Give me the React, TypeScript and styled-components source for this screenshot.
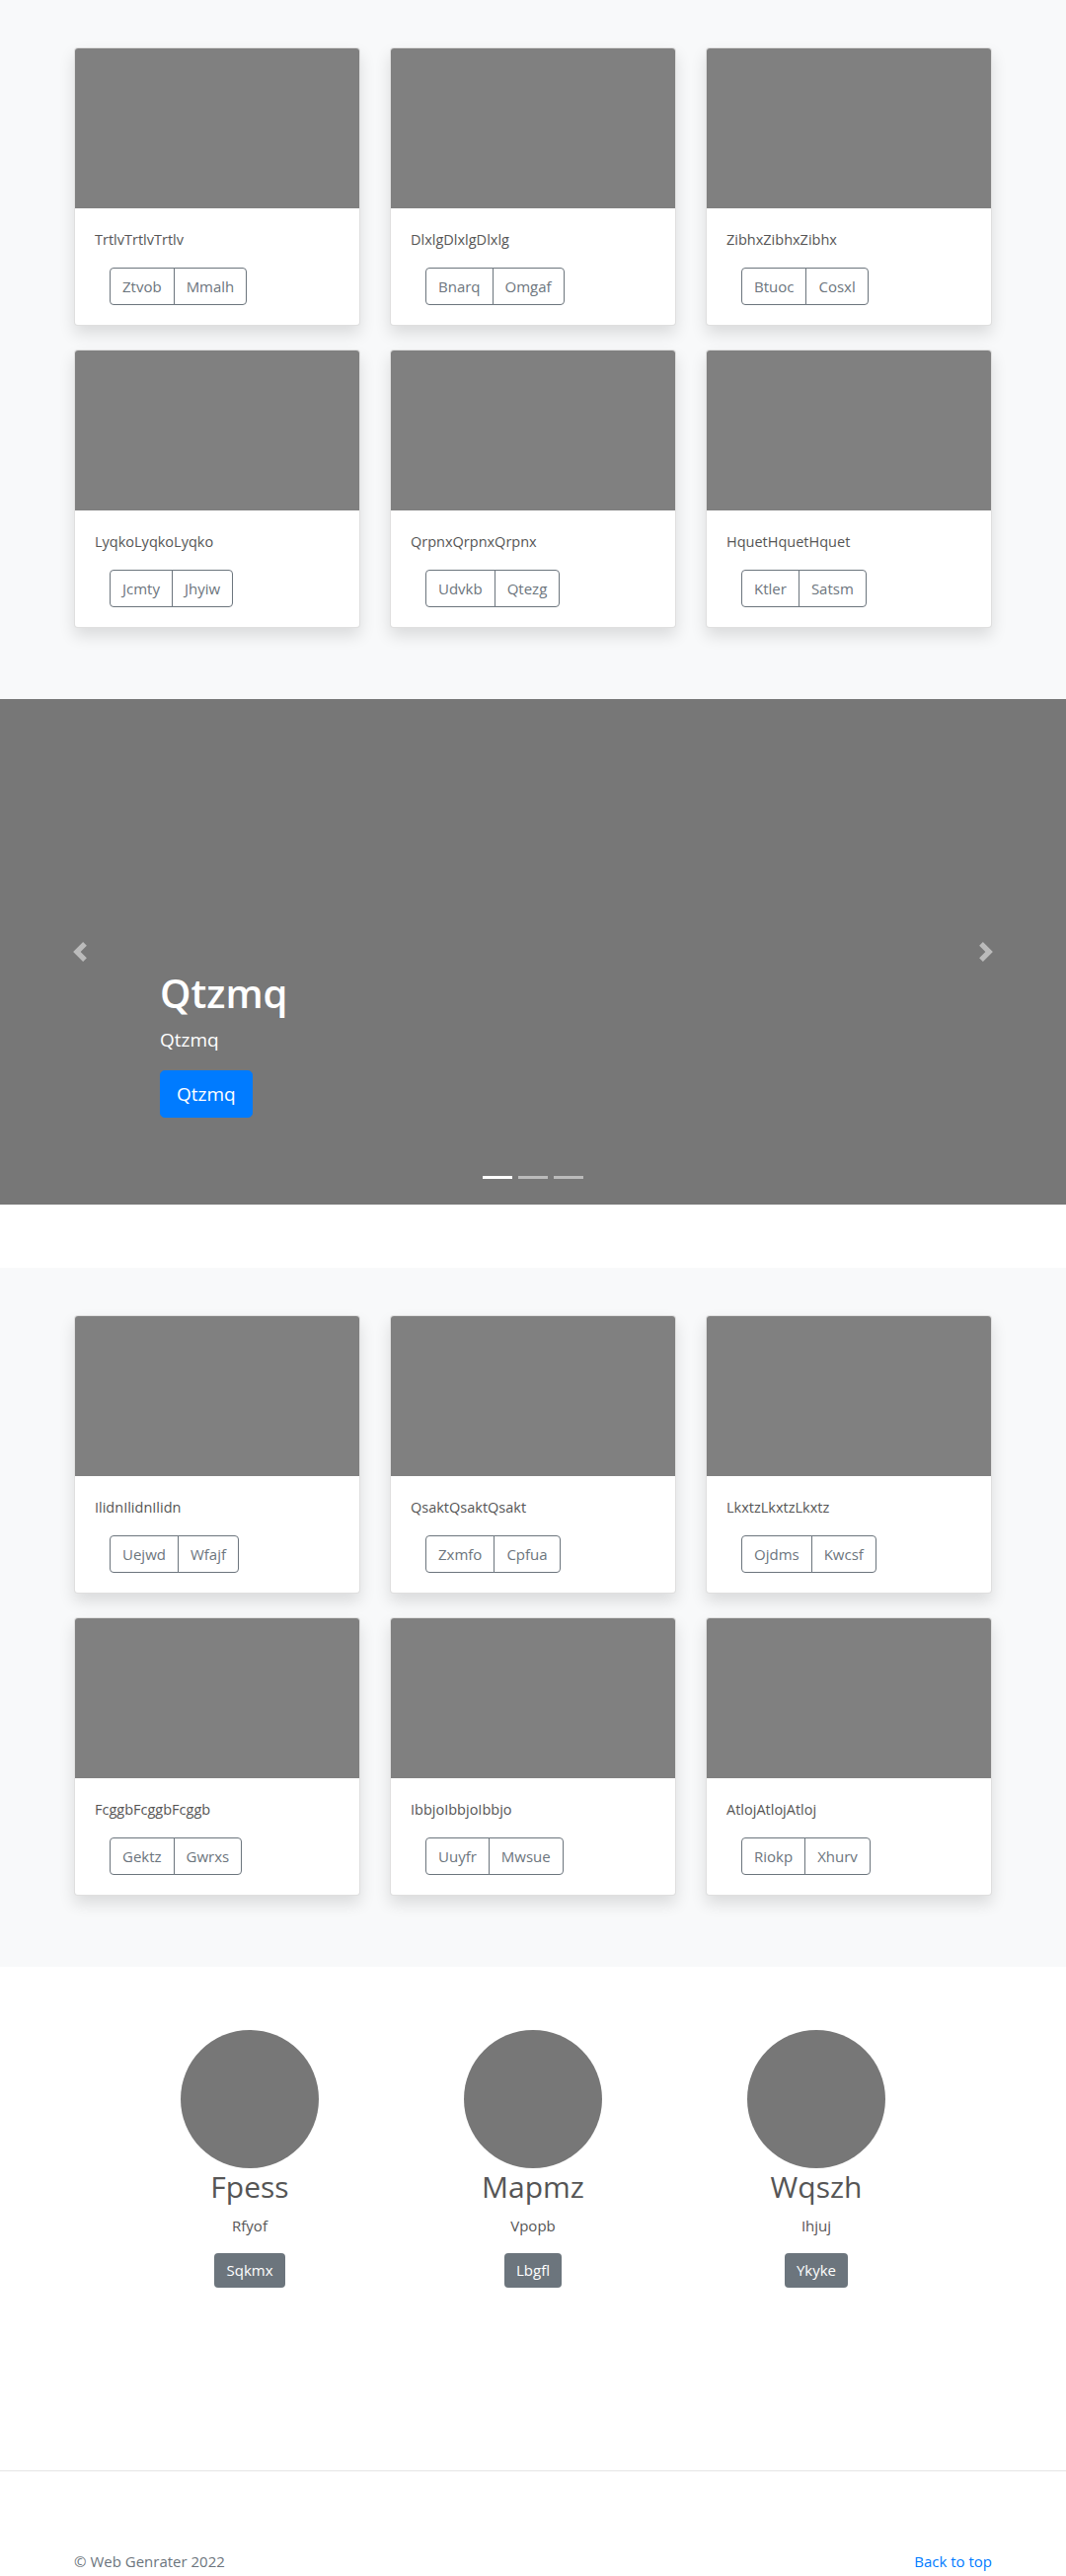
import React from "react";
import styled, { createGlobalStyle } from "styled-components";

const GlobalStyle = createGlobalStyle`
  * { box-sizing: border-box; }
  html, body { margin: 0; padding: 0; }
  body {
    font-family: "Open Sans", "Noto Sans", "Liberation Sans", sans-serif;
    font-size: 16px;
    line-height: 1.5;
    color: #212529;
    background: #fff;
  }
`;

const Album = styled.section`
  background: #f8f9fa;
  padding: 48px 0 48px;
`;

const Container = styled.div`
  width: 960px;
  margin: 0 auto;
  padding: 0 15px;
`;

const CardGrid = styled.div`
  display: grid;
  grid-template-columns: repeat(3, 290px);
  column-gap: 30px;
`;

const Card = styled.div`
  background: #fff;
  border: 1px solid rgba(0, 0, 0, 0.125);
  border-radius: 4px;
  box-shadow: 0 0.5rem 1rem rgba(0, 0, 0, 0.12);
  margin-bottom: 24px;
  overflow: hidden;
  display: flex;
  flex-direction: column;
`;

const CardImage = styled.div`
  height: 162px;
  background: #808080;
`;

const CardBody = styled.div`
  padding: 20px;
`;

const CardText = styled.p`
  margin: 0 0 16px;
  font-size: 14.5px;
  line-height: 24px;
  color: #555;
`;

const BtnGroup = styled.div`
  display: inline-flex;
  margin-left: 15px;
`;

const OutlineBtn = styled.button<{ $pos: "first" | "last" }>`
  font-family: inherit;
  font-size: 15px;
  line-height: 24px;
  padding: 6px 12px;
  color: #6c757d;
  background: transparent;
  border: 1px solid #6c757d;
  border-radius: ${(p) => (p.$pos === "first" ? "4px 0 0 4px" : "0 4px 4px 0")};
  margin-left: ${(p) => (p.$pos === "first" ? "0" : "-1px")};
  cursor: pointer;
`;

const Carousel = styled.div`
  position: relative;
  height: 512px;
  background: #777;
  margin-bottom: 64px;
`;

const Control = styled.div<{ $side: "left" | "right" }>`
  position: absolute;
  top: 0;
  bottom: 0;
  ${(p) => p.$side}: 0;
  width: 15%;
  display: flex;
  align-items: center;
  justify-content: center;
  opacity: 0.5;
`;

const Caption = styled.div`
  position: absolute;
  left: 15%;
  right: 15%;
  bottom: 52px;
  padding: 20px 0;
  color: #fff;
  text-align: left;
`;

const CaptionTitle = styled.h1`
  margin: 0 0 8px;
  font-size: 40px;
  font-weight: 600;
  line-height: 1.2;
`;

const Lead = styled.p`
  margin: 0 0 16px;
  font-size: 19px;
  line-height: 30px;
`;

const BtnRow = styled.p`
  margin: 0 0 16px;
  line-height: 0;
`;

const PrimaryBtnLg = styled.a`
  display: inline-block;
  background: #007bff;
  color: #fff;
  font-size: 19px;
  line-height: 30px;
  padding: 8px 16px;
  border: 1px solid #007bff;
  border-radius: 4.8px;
  text-decoration: none;
`;

const Indicators = styled.ol`
  position: absolute;
  left: 0;
  right: 0;
  bottom: 0;
  margin: 0 0 16px;
  padding: 0;
  list-style: none;
  display: flex;
  justify-content: center;
`;

const Indicator = styled.li<{ $active?: boolean }>`
  width: 30px;
  height: 3px;
  margin: 10px 3px;
  background: ${(p) => (p.$active ? "#fff" : "rgba(255,255,255,0.5)")};
`;

const Marketing = styled.section`
  padding: 64px 0 0;
`;

const MarketingGrid = styled.div`
  width: 861px;
  margin: 0 auto;
  display: grid;
  grid-template-columns: repeat(3, 1fr);
`;

const Person = styled.div`
  display: flex;
  flex-direction: column;
  align-items: center;
  text-align: center;
  margin-bottom: 24px;
`;

const Avatar = styled.div`
  width: 140px;
  height: 140px;
  border-radius: 50%;
  background: #777;
`;

const PersonName = styled.h2`
  margin: 0 0 8px;
  font-size: 30px;
  font-weight: 400;
  line-height: 38px;
  color: #555;
`;

const PersonRole = styled.p`
  margin: 0 0 16px;
  font-size: 15px;
  line-height: 24px;
  color: #555;
`;

const SecondaryBtn = styled.a`
  display: inline-block;
  background: #6c757d;
  color: #fff;
  font-size: 15px;
  line-height: 23px;
  padding: 6px 12px;
  border-radius: 4px;
  text-decoration: none;
`;

const Divider = styled.hr`
  margin: 161px 0 0;
  border: 0;
  border-top: 1px solid rgba(0, 0, 0, 0.1);
`;

const Footer = styled.footer`
  padding: 79px 0 1px;
`;

const FooterRow = styled.div`
  display: flex;
  justify-content: space-between;
  align-items: center;
  font-size: 15px;
  line-height: 24px;
`;

const Muted = styled.p`
  margin: 0;
  color: #6c757d;
`;

const Link = styled.a`
  color: #007bff;
  text-decoration: none;
`;

type CardData = { text: string; a: string; b: string };

const album1: CardData[] = [
  { text: "TrtlvTrtlvTrtlv", a: "Ztvob", b: "Mmalh" },
  { text: "DlxlgDlxlgDlxlg", a: "Bnarq", b: "Omgaf" },
  { text: "ZibhxZibhxZibhx", a: "Btuoc", b: "Cosxl" },
  { text: "LyqkoLyqkoLyqko", a: "Jcmty", b: "Jhyiw" },
  { text: "QrpnxQrpnxQrpnx", a: "Udvkb", b: "Qtezg" },
  { text: "HquetHquetHquet", a: "Ktler", b: "Satsm" },
];

const album2: CardData[] = [
  { text: "IlidnIlidnIlidn", a: "Uejwd", b: "Wfajf" },
  { text: "QsaktQsaktQsakt", a: "Zxmfo", b: "Cpfua" },
  { text: "LkxtzLkxtzLkxtz", a: "Ojdms", b: "Kwcsf" },
  { text: "FcggbFcggbFcggb", a: "Gektz", b: "Gwrxs" },
  { text: "IbbjoIbbjoIbbjo", a: "Uuyfr", b: "Mwsue" },
  { text: "AtlojAtlojAtloj", a: "Riokp", b: "Xhurv" },
];

const people = [
  { name: "Fpess", role: "Rfyof", btn: "Sqkmx" },
  { name: "Mapmz", role: "Vpopb", btn: "Lbgfl" },
  { name: "Wqszh", role: "Ihjuj", btn: "Ykyke" },
];

const AlbumSection = ({ cards }: { cards: CardData[] }) => (
  <Album>
    <Container>
      <CardGrid>
        {cards.map((c) => (
          <Card key={c.text}>
            <CardImage />
            <CardBody>
              <CardText>{c.text}</CardText>
              <BtnGroup>
                <OutlineBtn $pos="first">{c.a}</OutlineBtn>
                <OutlineBtn $pos="last">{c.b}</OutlineBtn>
              </BtnGroup>
            </CardBody>
          </Card>
        ))}
      </CardGrid>
    </Container>
  </Album>
);

const PrevIcon = () => (
  <svg width="20" height="20" viewBox="0 0 8 8" fill="#fff">
    <path d="M5.25 0l-4 4 4 4 1.5-1.5L4.25 4l2.5-2.5L5.25 0z" />
  </svg>
);

const NextIcon = () => (
  <svg width="20" height="20" viewBox="0 0 8 8" fill="#fff">
    <path d="M2.75 0l-1.5 1.5L3.75 4l-2.5 2.5L2.75 8l4-4-4-4z" />
  </svg>
);

export default function App() {
  return (
    <>
      <GlobalStyle />
      <AlbumSection cards={album1} />
      <Carousel>
        <Caption>
          <CaptionTitle>Qtzmq</CaptionTitle>
          <Lead>Qtzmq</Lead>
          <BtnRow>
            <PrimaryBtnLg href="#">Qtzmq</PrimaryBtnLg>
          </BtnRow>
        </Caption>
        <Control $side="left">
          <PrevIcon />
        </Control>
        <Control $side="right">
          <NextIcon />
        </Control>
        <Indicators>
          <Indicator $active />
          <Indicator />
          <Indicator />
        </Indicators>
      </Carousel>
      <AlbumSection cards={album2} />
      <Marketing>
        <MarketingGrid>
          {people.map((p) => (
            <Person key={p.name}>
              <Avatar />
              <PersonName>{p.name}</PersonName>
              <PersonRole>{p.role}</PersonRole>
              <SecondaryBtn href="#">{p.btn}</SecondaryBtn>
            </Person>
          ))}
        </MarketingGrid>
      </Marketing>
      <Divider />
      <Footer>
        <Container>
          <FooterRow>
            <Muted>© Web Genrater 2022</Muted>
            <Link href="#">Back to top</Link>
          </FooterRow>
        </Container>
      </Footer>
    </>
  );
}
